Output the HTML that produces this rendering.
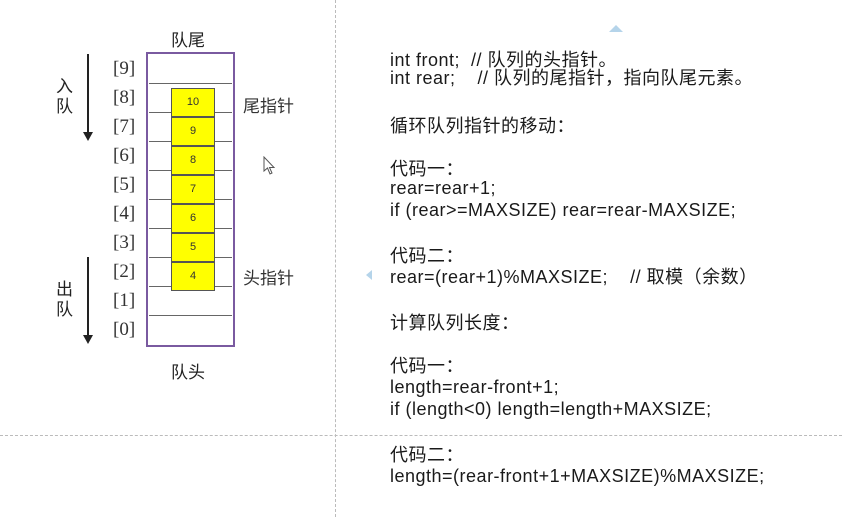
<!DOCTYPE html>
<html><head><meta charset="utf-8"><style>
body{margin:0;width:842px;height:517px;background:#fff;position:relative;overflow:hidden;font-family:"Liberation Sans","Noto Sans CJK SC",sans-serif;color:#222}
.a{position:absolute;white-space:nowrap}
.t{position:absolute;left:390px;font-size:18px;letter-spacing:0.5px;line-height:20px;white-space:nowrap;color:#1a1a1a}
.l{position:absolute;left:113px;font-family:"Liberation Serif","Noto Serif CJK SC",serif;font-size:19px;line-height:20px;color:#333}
.c{position:absolute;left:171px;width:42px;height:27px;background:#ffff00;border:1px solid #555;font-size:11px;line-height:27px;text-align:center;color:#333}
.r{position:absolute;left:149px;width:83px;height:0;border-top:1px solid #666}
</style></head><body>
<div style="position:absolute;left:335px;top:0;height:517px;border-left:1px dashed #bbb"></div>
<div style="position:absolute;left:0;top:435px;width:842px;border-top:1px dashed #bbb"></div>
<div style="position:absolute;left:609px;top:25px;width:0;height:0;border-left:7px solid transparent;border-right:7px solid transparent;border-bottom:7px solid #b5d4ea"></div>
<div style="position:absolute;left:366px;top:270px;width:0;height:0;border-top:5px solid transparent;border-bottom:5px solid transparent;border-right:6px solid #b5d4ea"></div>

<div class="a" style="left:171px;top:26px;font-size:17px">队尾</div>
<div class="a" style="left:171px;top:358px;font-size:17px">队头</div>
<div class="a" style="left:243px;top:92px;font-size:17px;color:#333">尾指针</div>
<div class="a" style="left:243px;top:264px;font-size:17px;color:#333">头指针</div>
<div class="a" style="left:56px;top:77px;font-size:17px;line-height:20px;width:18px;white-space:normal">入队</div>
<div class="a" style="left:56px;top:280px;font-size:17px;line-height:20px;width:18px;white-space:normal">出队</div>
<div style="position:absolute;left:87px;top:54px;width:2px;height:80px;background:#222"></div>
<div style="position:absolute;left:83px;top:132px;border-left:5px solid transparent;border-right:5px solid transparent;border-top:9px solid #222"></div>
<div style="position:absolute;left:87px;top:257px;width:2px;height:80px;background:#222"></div>
<div style="position:absolute;left:83px;top:335px;border-left:5px solid transparent;border-right:5px solid transparent;border-top:9px solid #222"></div>

<div style="position:absolute;left:146px;top:52px;width:85px;height:291px;border:2px solid #7a5aa0"></div>
<div class="r" style="top:83px"></div><div class="r" style="top:112px"></div><div class="r" style="top:141px"></div><div class="r" style="top:170px"></div><div class="r" style="top:199px"></div><div class="r" style="top:228px"></div><div class="r" style="top:257px"></div><div class="r" style="top:286px"></div><div class="r" style="top:315px"></div>

<div class="l" style="top:59px">[9]</div><div class="l" style="top:88px">[8]</div><div class="l" style="top:117px">[7]</div><div class="l" style="top:146px">[6]</div><div class="l" style="top:175px">[5]</div><div class="l" style="top:204px">[4]</div><div class="l" style="top:233px">[3]</div><div class="l" style="top:262px">[2]</div><div class="l" style="top:291px">[1]</div><div class="l" style="top:320px">[0]</div>

<div class="c" style="top:88px">10</div><div class="c" style="top:117px">9</div><div class="c" style="top:146px">8</div><div class="c" style="top:175px">7</div><div class="c" style="top:204px">6</div><div class="c" style="top:233px">5</div><div class="c" style="top:262px">4</div>

<svg style="position:absolute;left:263px;top:156px" width="14" height="20"><path d="M1 1 L1 15 L4.5 12 L7 18 L9 17 L6.5 11.5 L11 11.5 Z" fill="#fff" stroke="#555" stroke-width="1"/></svg>

<div class="t" style="top:50px">int front;&nbsp; // 队列的头指针。</div>
<div class="t" style="top:68px">int rear;&nbsp;&nbsp;&nbsp; // 队列的尾指针，指向队尾元素。</div>
<div class="t" style="top:116px">循环队列指针的移动：</div>
<div class="t" style="top:159px">代码一：</div>
<div class="t" style="top:178px">rear=rear+1;</div>
<div class="t" style="top:200px">if (rear&gt;=MAXSIZE) rear=rear-MAXSIZE;</div>
<div class="t" style="top:246px">代码二：</div>
<div class="t" style="top:267px">rear=(rear+1)%MAXSIZE;&nbsp;&nbsp;&nbsp; // 取模（余数）</div>
<div class="t" style="top:313px">计算队列长度：</div>
<div class="t" style="top:356px">代码一：</div>
<div class="t" style="top:377px">length=rear-front+1;</div>
<div class="t" style="top:399px">if (length&lt;0) length=length+MAXSIZE;</div>
<div class="t" style="top:445px">代码二：</div>
<div class="t" style="top:466px">length=(rear-front+1+MAXSIZE)%MAXSIZE;</div>
</body></html>
